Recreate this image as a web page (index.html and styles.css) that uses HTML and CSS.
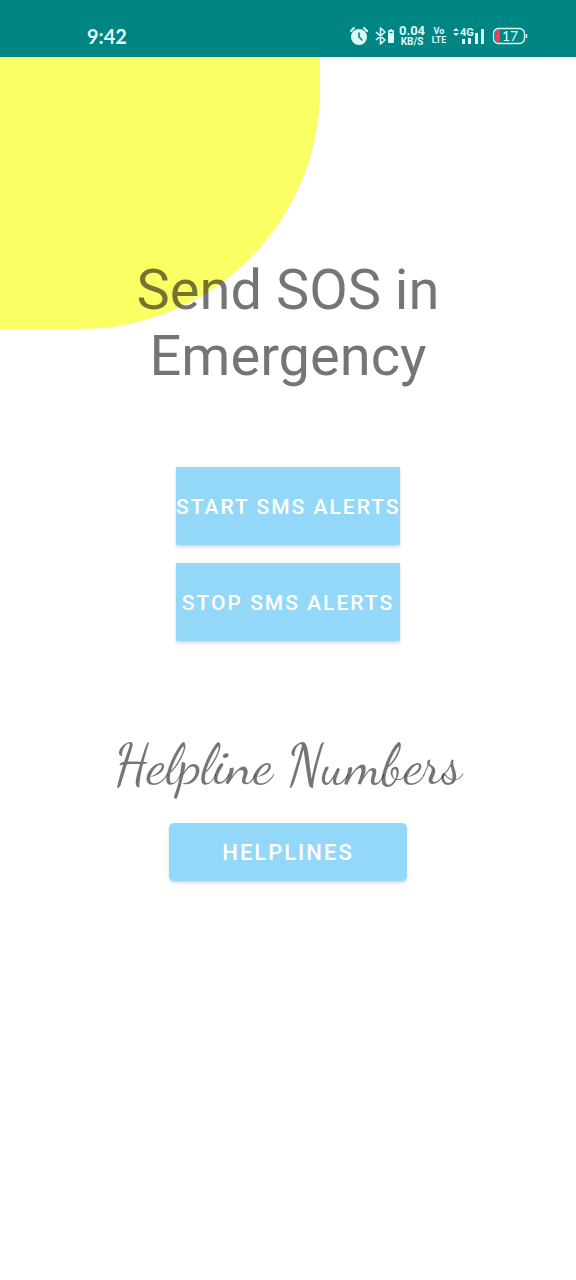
FILE: index.html
```html
<!DOCTYPE html>
<html lang="en">
<head>
<meta charset="utf-8">
<meta name="viewport" content="width=device-width, initial-scale=1">
<title>Send SOS in Emergency</title>
<link rel="stylesheet" href="styles.css">
</head>
<body>
<header class="status-bar">
  <time class="clock">9:42</time>
  <div class="indicators">
    <svg class="icon-alarm" width="18" height="20" viewBox="0 0 18 20" aria-hidden="true">
      <path d="M1 5L4 2M17 5L14 2" stroke="currentColor" stroke-width="2" stroke-linecap="round"/>
      <circle cx="9" cy="11" r="8" fill="currentColor"/>
      <path d="M9 7v4l3 3" fill="none" stroke="#008585" stroke-width="1.6" stroke-linecap="round"/>
    </svg>
    <svg class="icon-bluetooth" width="19" height="18" viewBox="0 0 19 18" aria-hidden="true">
      <path d="M1 5l9 8-4.500 4V1L10 5l-9 8" fill="none" stroke="currentColor" stroke-width="1.600" stroke-linejoin="round"/>
      <path d="M14 3h1V2h2v1h1q1 0 1 1v11q0 1-1 1h-4q-1 0-1-1V4q0-1 1-1z" fill="currentColor"/>
      <path d="M14.500 5.500h3" stroke="#008585" stroke-width="1.200"/>
    </svg>
    <span class="speed"><span class="speed-value">0.04</span><span class="speed-unit">KB/S</span></span>
    <span class="volte"><span>Vo</span><span>LTE</span></span>
    <span class="signal">
      <svg width="32" height="18" viewBox="0 0 32 18" aria-hidden="true">
        <path d="M0 4l3-3 3 3zM0 6l3 3 3-3zM9 12h3v5H9zM15 11h3v6h-3zM22 6h3v11h-3zM28 2h3v15h-3z" fill="currentColor"/>
      </svg>
      <span class="network">4G</span>
    </span>
    <span class="battery">
      <svg width="36" height="18" viewBox="0 0 36 18" aria-hidden="true">
        <path d="M8 3H6Q3 3 3 6v6q0 3 3 3h2z" fill="#f43b50"/>
        <rect x="1.500" y="1.500" width="31" height="15" rx="5" fill="none" stroke="currentColor" stroke-width="1.300"/>
        <path d="M34.500 7v4" stroke="currentColor" stroke-width="1.500"/>
      </svg>
      <span class="battery-level">17</span>
    </span>
  </div>
</header>
<main class="screen">
  <div class="corner-shape"></div>
  <h1 class="title">Send SOS in Emergency</h1>
  <div class="alert-actions">
    <button class="button" type="button">START SMS ALERTS</button>
    <button class="button" type="button">STOP SMS ALERTS</button>
  </div>
  <h2 class="subtitle">Helpline Numbers</h2>
  <button class="button button-rounded" type="button">HELPLINES</button>
</main>
</body>
</html>
```
FILE: styles.css
```css
* {
  box-sizing: border-box;
}

body {
  margin: 0;
  min-height: 100vh;
  background: #fff;
  font-family: Roboto, "Liberation Sans", sans-serif;
}

.status-bar {
  display: flex;
  justify-content: space-between;
  align-items: center;
  padding: 16px 48px 1px 87px;
  height: 57px;
  background: #008585;
  color: #dffafa;
}

.clock {
  font: 700 20px/24px Lato, sans-serif;
}

.indicators {
  display: flex;
  align-items: center;
}

.indicators svg {
  display: block;
}

.icon-alarm {
  margin-right: 7px;
}

.speed,
.volte {
  display: flex;
  flex-direction: column;
  align-items: center;
  font-weight: 700;
}

.speed {
  width: 28px;
  margin: 0 6px 0 4px;
}

.speed-value {
  font-size: 13px;
  line-height: 12px;
}

.speed-unit {
  font-size: 10px;
  line-height: 10px;
}

.volte {
  width: 14px;
  margin-right: 7px;
  font: 700 9px/9px Roboto, sans-serif;
}

.signal,
.battery {
  position: relative;
}

.signal {
  margin-right: 7px;
}

.network {
  position: absolute;
  left: 7px;
  top: 0;
  font-size: 11px;
  line-height: 11px;
  font-weight: 700;
}

.battery-level {
  position: absolute;
  top: 0;
  left: 10px;
  font: 14px/18px Lato, sans-serif;
}

.screen {
  position: relative;
  display: flex;
  flex-direction: column;
  align-items: center;
  padding: 200px 24px 48px;
}

.corner-shape {
  position: absolute;
  left: 0;
  top: 0;
  z-index: -1;
  width: 320px;
  height: 272px;
  border-bottom-right-radius: 240px;
  background: #faff64;
}

.title,
.subtitle {
  margin: 0;
  color: rgba(0, 0, 0, 0.54);
  text-align: center;
  font-weight: 400;
}

.title {
  max-width: 360px;
  font-size: 56px;
  line-height: 66px;
}

.alert-actions {
  display: grid;
  grid-template-columns: 100%;
  gap: 18px;
  width: 224px;
  margin-top: 78px;
}

.button {
  height: 78px;
  padding: 2px 0 0;
  border: 0;
  border-radius: 0;
  background: #94d8f9;
  color: #fff;
  box-shadow: 0 2px 3px rgba(0, 0, 0, 0.16);
  font: 500 21px/26px Roboto, "Liberation Sans", sans-serif;
  letter-spacing: 2px;
  white-space: nowrap;
}

.subtitle {
  margin-top: 90px;
  font: 56px/68px "Dancing Script", "Liberation Serif", cursive;
}

.button-rounded {
  width: 238px;
  height: 58px;
  margin-top: 24px;
  border-radius: 5px;
  font-size: 22px;
}
```
